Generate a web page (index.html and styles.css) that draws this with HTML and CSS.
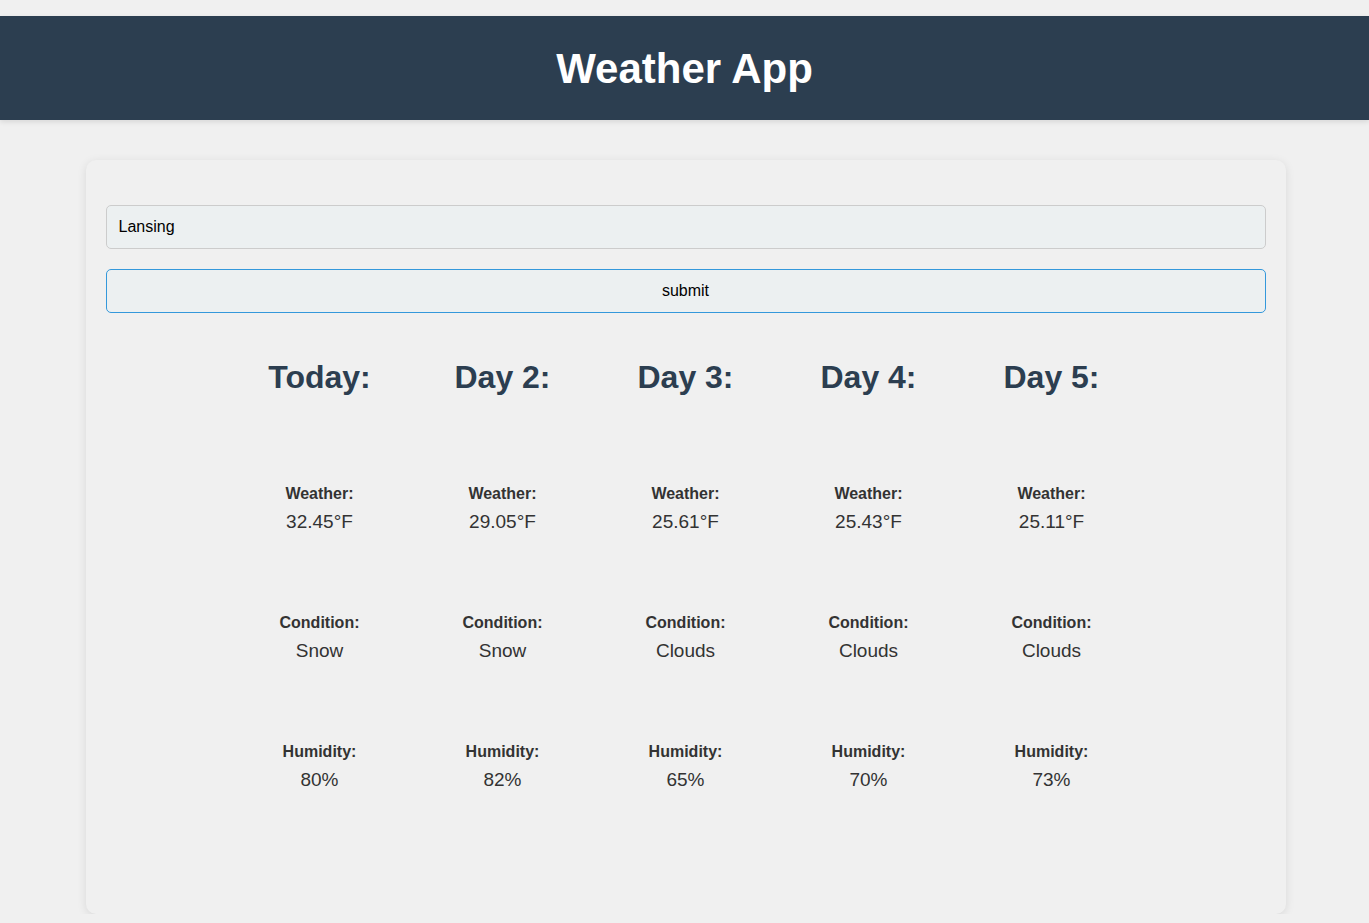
FILE: index.html
```html
<!DOCTYPE html>
<html lang="en">
<head>
<meta charset="utf-8">
<title>Weather App</title>
<link rel="stylesheet" href="styles.css">
</head>
<body>
<header class="app-header">
  <h1 class="app-title">Weather App</h1>
</header>
<main class="card">
  <form class="search-form">
    <input class="city-input" type="text" value="Lansing">
    <button class="submit-btn" type="button">submit</button>
  </form>
  <section class="forecast">
    <div class="day">
      <h2 class="day-title">Today:</h2>
      <div class="stat"><h4 class="stat-label">Weather:</h4><p class="stat-value">32.45°F</p></div>
      <div class="stat"><h4 class="stat-label">Condition:</h4><p class="stat-value">Snow</p></div>
      <div class="stat"><h4 class="stat-label">Humidity:</h4><p class="stat-value">80%</p></div>
    </div>
    <div class="day">
      <h2 class="day-title">Day 2:</h2>
      <div class="stat"><h4 class="stat-label">Weather:</h4><p class="stat-value">29.05°F</p></div>
      <div class="stat"><h4 class="stat-label">Condition:</h4><p class="stat-value">Snow</p></div>
      <div class="stat"><h4 class="stat-label">Humidity:</h4><p class="stat-value">82%</p></div>
    </div>
    <div class="day">
      <h2 class="day-title">Day 3:</h2>
      <div class="stat"><h4 class="stat-label">Weather:</h4><p class="stat-value">25.61°F</p></div>
      <div class="stat"><h4 class="stat-label">Condition:</h4><p class="stat-value">Clouds</p></div>
      <div class="stat"><h4 class="stat-label">Humidity:</h4><p class="stat-value">65%</p></div>
    </div>
    <div class="day">
      <h2 class="day-title">Day 4:</h2>
      <div class="stat"><h4 class="stat-label">Weather:</h4><p class="stat-value">25.43°F</p></div>
      <div class="stat"><h4 class="stat-label">Condition:</h4><p class="stat-value">Clouds</p></div>
      <div class="stat"><h4 class="stat-label">Humidity:</h4><p class="stat-value">70%</p></div>
    </div>
    <div class="day">
      <h2 class="day-title">Day 5:</h2>
      <div class="stat"><h4 class="stat-label">Weather:</h4><p class="stat-value">25.11°F</p></div>
      <div class="stat"><h4 class="stat-label">Condition:</h4><p class="stat-value">Clouds</p></div>
      <div class="stat"><h4 class="stat-label">Humidity:</h4><p class="stat-value">73%</p></div>
    </div>
  </section>
</main>
</body>
</html>
```

FILE: styles.css
```css
* {
  box-sizing: border-box;
}

html, body {
  margin: 0;
  padding: 0;
}

body {
  background: #f0f0f0;
  font-family: "Liberation Sans", Arial, sans-serif;
  color: #333;
  padding-top: 16px;
}

.app-header {
  background: #2c3e50;
  height: 104px;
  display: flex;
  align-items: center;
  justify-content: center;
  box-shadow: 0 2px 5px rgba(0, 0, 0, 0.1);
}

.app-title {
  margin: 0;
  color: #fff;
  font-size: 42px;
  font-weight: bold;
  line-height: 48px;
  padding-top: 2px;
}

.card {
  display: block;
  width: 1200px;
  margin: 40px auto 0 calc(50% - 599px);
  padding: 45px 20px 122px;
  background: #f0f0f0;
  border-radius: 10px;
  box-shadow: 0 2px 10px rgba(0, 0, 0, 0.1);
}

.search-form {
  display: flex;
  flex-direction: column;
  gap: 20px;
}

.city-input,
.submit-btn {
  width: 100%;
  height: 44px;
  font-family: "Liberation Sans", Arial, sans-serif;
  font-size: 16px;
  color: #000;
  background: #ecf0f1;
  border-radius: 5px;
  margin: 0;
}

.city-input {
  border: 1px solid #ccc;
  padding: 0 12px;
  outline: none;
}

.submit-btn {
  border: 1px solid #3498db;
  cursor: pointer;
}

.forecast {
  display: flex;
  justify-content: center;
  margin-top: 44px;
}

.day {
  width: 183px;
  display: flex;
  flex-direction: column;
  align-items: center;
  text-align: center;
}

.day-title {
  margin: 0 0 87px;
  font-size: 32px;
  line-height: 40px;
  font-weight: bold;
  color: #2c3e50;
}

.stat {
  display: flex;
  flex-direction: column;
  align-items: center;
  gap: 6px;
  margin-bottom: 79px;
}

.stat:last-child {
  margin-bottom: 0;
}

.stat-label {
  margin: 0;
  font-size: 16px;
  line-height: 20px;
  font-weight: bold;
  color: #333;
}

.stat-value {
  margin: 0;
  font-size: 19px;
  line-height: 24px;
  color: #333;
}
```
